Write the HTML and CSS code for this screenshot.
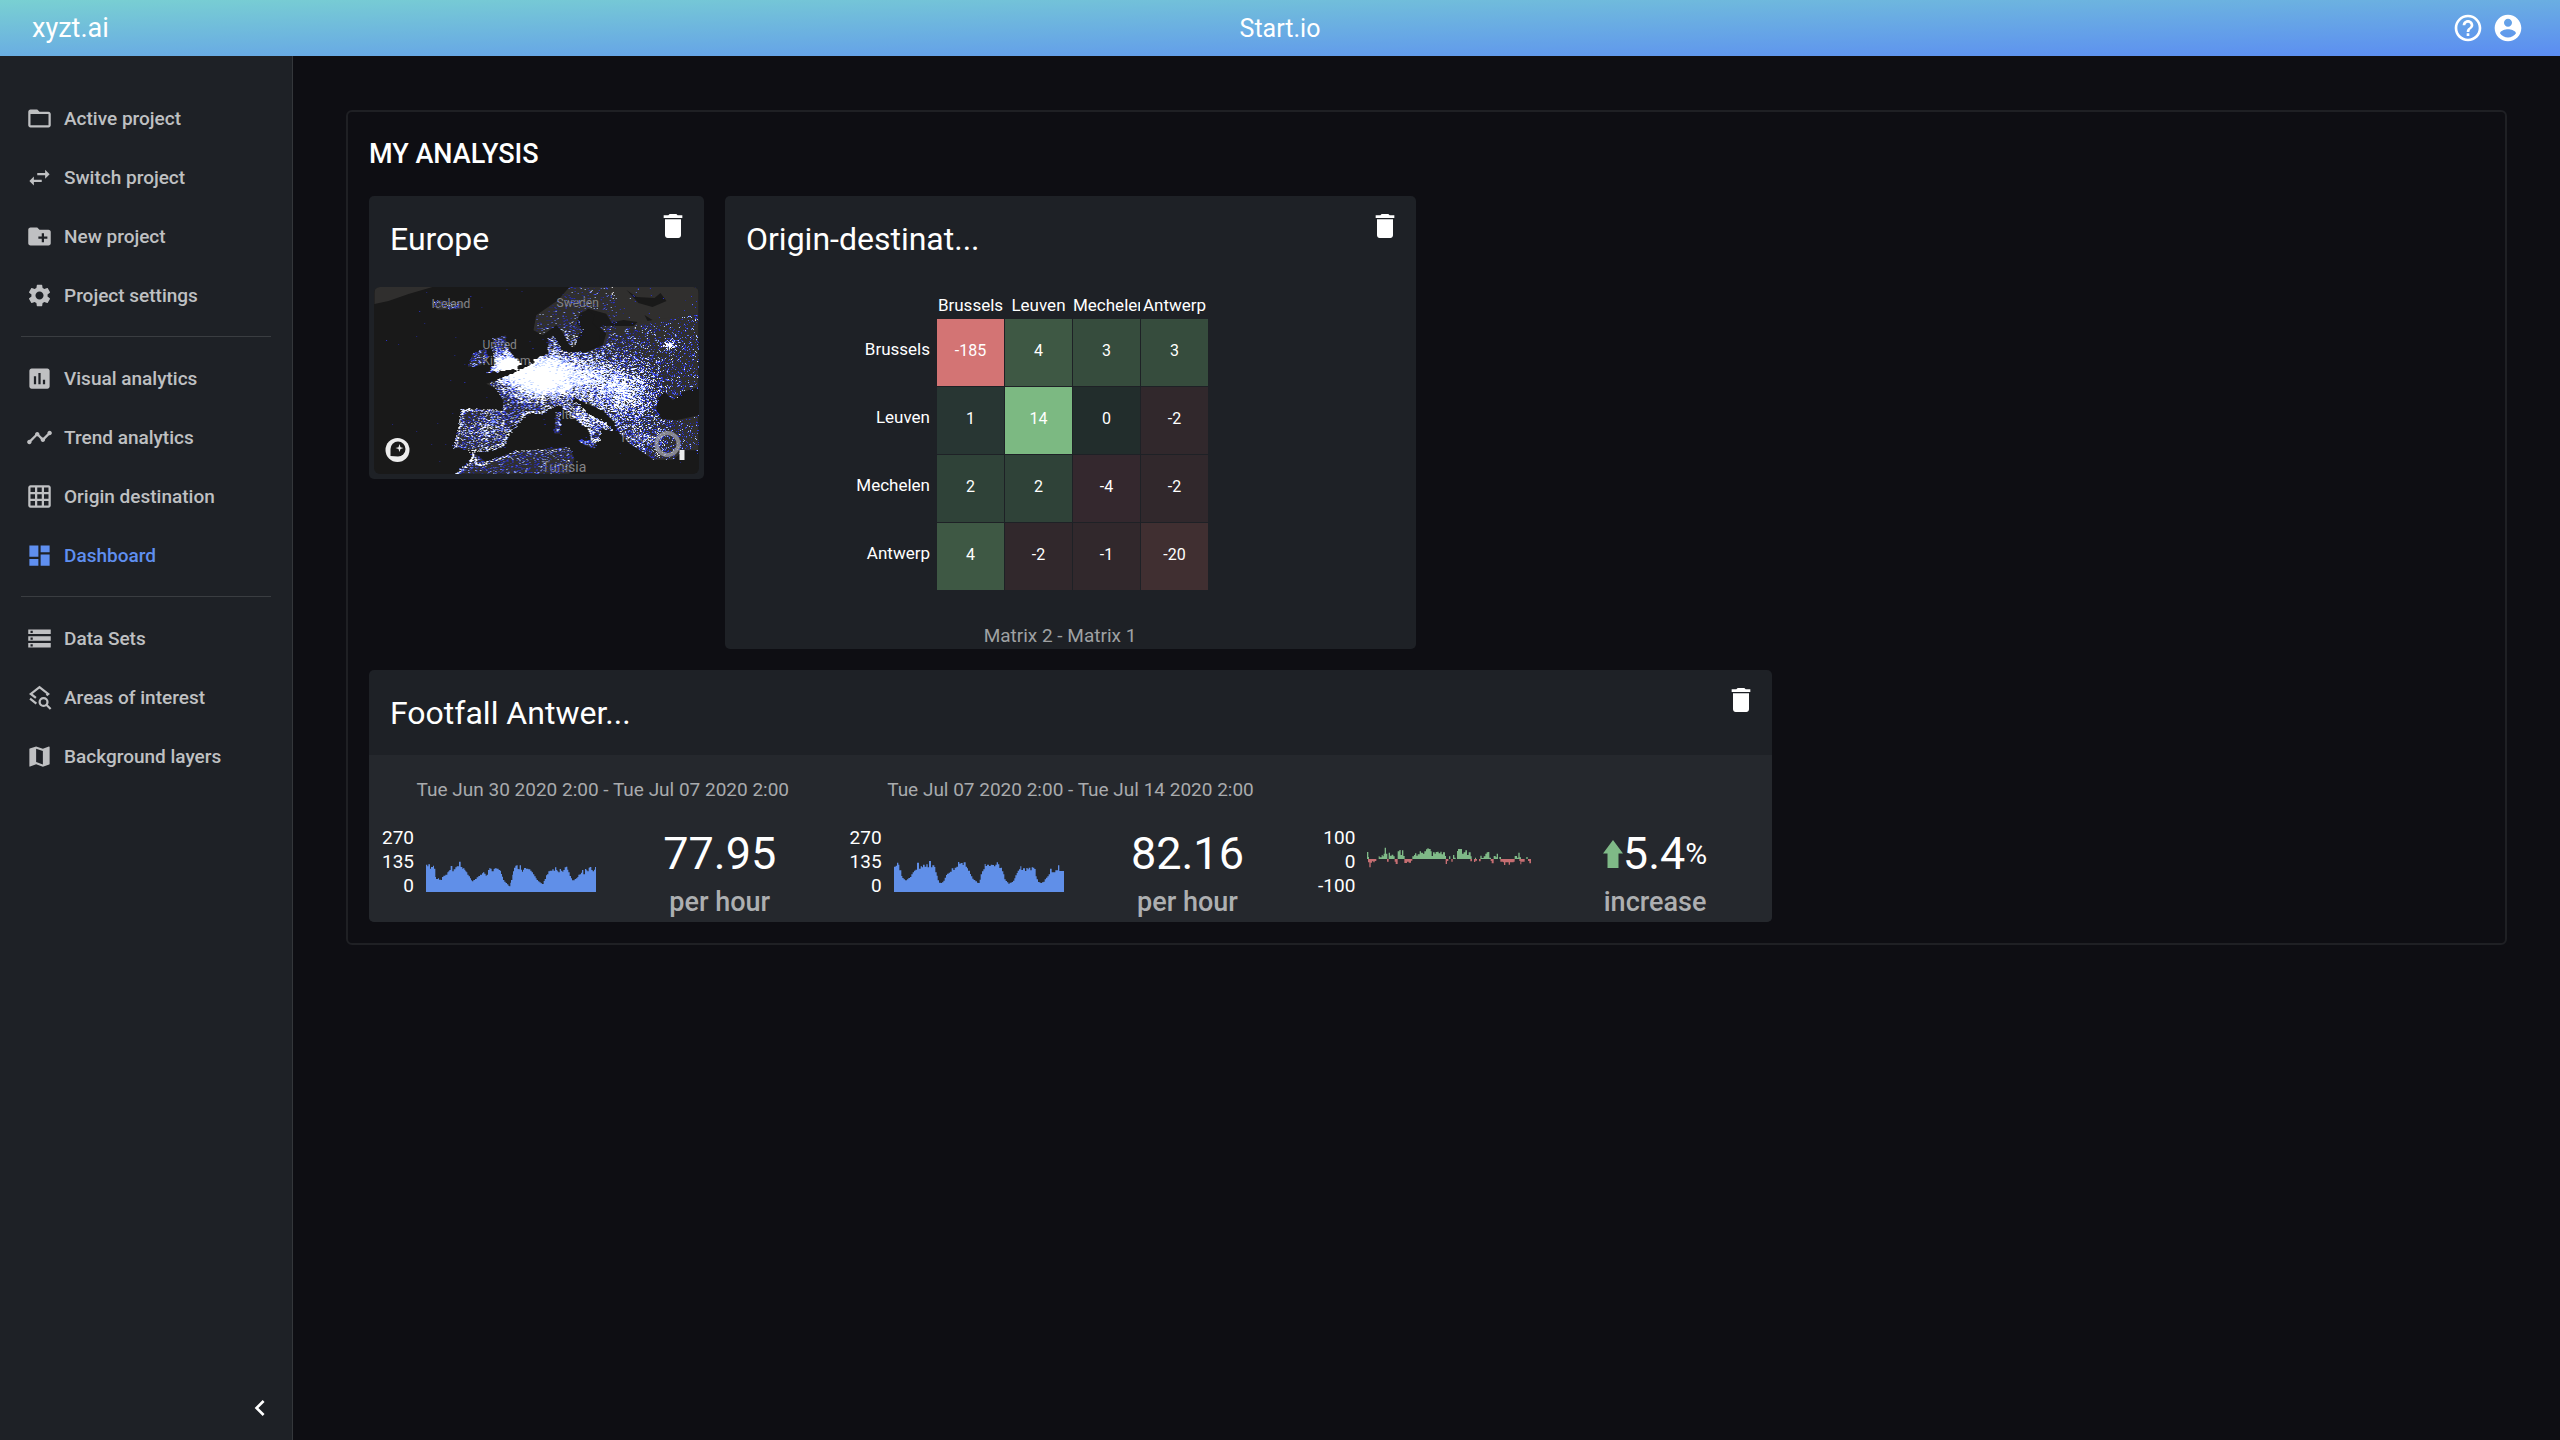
FILE: index.html
```html
<!DOCTYPE html>
<html lang="en">
<head>
<meta charset="utf-8">
<title>xyzt.ai - Dashboard</title>
<link rel="stylesheet" href="styles.css">
</head>
<body>
<header class="topbar">
  <a class="brand" href="#">xyzt.ai</a>
  <span class="topbar-title">Start.io</span>
  <div class="topbar-actions">
    <button class="icon-button" type="button" aria-label="Help"><svg class="icon-lg" viewBox="0 0 24 24"><path d="M11 18h2v-2h-2v2zm1-16C6.48 2 2 6.48 2 12s4.480 10 10 10 10-4.480 10-10S17.520 2 12 2zm0 18c-4.410 0-8-3.590-8-8s3.590-8 8-8 8 3.590 8 8-3.590 8-8 8zm0-14c-2.210 0-4 1.790-4 4h2c0-1.100.9-2 2-2s2 .9 2 2c0 2-3 1.750-3 5h2c0-2.250 3-2.500 3-5 0-2.210-1.790-4-4-4z"/></svg></button>
    <button class="icon-button" type="button" aria-label="Account"><svg class="icon-lg" viewBox="0 0 24 24"><path d="M12 2C6.48 2 2 6.48 2 12s4.480 10 10 10 10-4.480 10-10S17.520 2 12 2zm0 3c1.660 0 3 1.340 3 3s-1.340 3-3 3-3-1.340-3-3 1.340-3 3-3zm0 14.200c-2.500 0-4.710-1.280-6-3.220.03-1.990 4-3.080 6-3.080 1.990 0 5.970 1.090 6 3.080-1.290 1.940-3.500 3.220-6 3.220z"/></svg></button>
  </div>
</header>
<div class="layout">
  <aside class="sidebar">
    <nav>
      <ul class="nav-group">
        <li><a class="nav-item" href="#"><svg class="icon" viewBox="0 0 24 24"><path d="M20 6h-8l-2-2H4c-1.100 0-1.990.9-1.990 2L2 18c0 1.100.9 2 2 2h16c1.100 0 2-.9 2-2V8c0-1.100-.9-2-2-2zm0 12H4V8h16v10z"/></svg>Active project</a></li>
        <li><a class="nav-item" href="#"><svg class="icon" viewBox="0 0 24 24"><path d="M6.990 11L3 15l3.990 4v-3H14v-2H6.990v-3zM21 9l-3.990-4v3H10v2h7.010v3L21 9z"/></svg>Switch project</a></li>
        <li><a class="nav-item" href="#"><svg class="icon" viewBox="0 0 24 24"><path d="M20 6h-8l-2-2H4c-1.110 0-1.990.89-1.990 2L2 18c0 1.110.89 2 2 2h16c1.110 0 2-.89 2-2V8c0-1.110-.89-2-2-2zm-1 8h-3v3h-2v-3h-3v-2h3V9h2v3h3v2z"/></svg>New project</a></li>
        <li><a class="nav-item" href="#"><svg class="icon" viewBox="0 0 24 24"><path d="M19.140 12.940c.04-.3.06-.61.06-.94 0-.32-.02-.64-.07-.94l2.030-1.580c.18-.14.23-.41.12-.61l-1.920-3.320c-.12-.22-.37-.29-.59-.22l-2.390.96c-.5-.38-1.030-.7-1.620-.94l-.36-2.540c-.04-.24-.24-.41-.48-.41h-3.840c-.24 0-.43.17-.47.41l-.36 2.540c-.59.24-1.130.57-1.620.94l-2.390-.96c-.22-.08-.47 0-.59.22L2.740 8.870c-.12.21-.08.47.12.61l2.030 1.580c-.05.3-.09.63-.09.94s.02.64.07.94l-2.030 1.580c-.18.14-.23.41-.12.61l1.920 3.320c.12.22.37.29.59.22l2.390-.96c.5.38 1.030.7 1.620.94l.36 2.540c.05.24.24.41.48.41h3.840c.24 0 .44-.17.47-.41l.36-2.540c.59-.24 1.130-.56 1.620-.94l2.390.96c.22.08.47 0 .59-.22l1.920-3.320c.12-.22.07-.47-.12-.61l-2.010-1.580zM12 15.600c-1.980 0-3.600-1.620-3.600-3.600s1.620-3.600 3.600-3.600 3.600 1.620 3.600 3.600-1.620 3.600-3.600 3.600z"/></svg>Project settings</a></li>
      </ul>
      <ul class="nav-group">
        <li><a class="nav-item" href="#"><svg class="icon" viewBox="0 0 24 24"><path d="M19 3H5c-1.100 0-2 .9-2 2v14c0 1.100.9 2 2 2h14c1.100 0 2-.9 2-2V5c0-1.100-.9-2-2-2zM9 17H7v-7h2v7zm4 0h-2V7h2v10zm4 0h-2v-4h2v4z"/></svg>Visual analytics</a></li>
        <li><a class="nav-item" href="#"><svg class="icon" viewBox="0 0 24 24"><path d="M23 8c0 1.100-.9 2-2 2-.18 0-.35-.02-.51-.07l-3.560 3.550c.05.16.07.34.07.52 0 1.100-.9 2-2 2s-2-.9-2-2c0-.18.02-.36.07-.52l-2.550-2.550c-.16.05-.34.07-.52.07s-.36-.02-.52-.07l-4.550 4.560c.05.16.07.33.07.51 0 1.100-.9 2-2 2s-2-.9-2-2 .9-2 2-2c.18 0 .35.02.51.07l4.560-4.550C8.020 9.360 8 9.180 8 9c0-1.100.9-2 2-2s2 .9 2 2c0 .18-.02.36-.07.52l2.550 2.550c.16-.05.34-.07.52-.07s.36.02.52.07l3.550-3.560C19.020 8.350 19 8.180 19 8c0-1.100.9-2 2-2s2 .9 2 2z"/></svg>Trend analytics</a></li>
        <li><a class="nav-item" href="#"><svg class="icon" viewBox="0 0 24 24"><path d="M20 2H4c-1.100 0-2 .9-2 2v16c0 1.100.9 2 2 2h16c1.100 0 2-.9 2-2V4c0-1.100-.9-2-2-2zM8 20H4v-4h4v4zm0-6H4v-4h4v4zm0-6H4V4h4v4zm6 12h-4v-4h4v4zm0-6h-4v-4h4v4zm0-6h-4V4h4v4zm6 12h-4v-4h4v4zm0-6h-4v-4h4v4zm0-6h-4V4h4v4z"/></svg>Origin destination</a></li>
        <li><a class="nav-item nav-item-active" href="#" aria-current="page"><svg class="icon" viewBox="0 0 24 24"><path d="M3 13h8V3H3v10zm0 8h8v-6H3v6zm10 0h8V11h-8v10zm0-18v6h8V3h-8z"/></svg>Dashboard</a></li>
      </ul>
      <ul class="nav-group">
        <li><a class="nav-item" href="#"><svg class="icon" viewBox="0 0 24 24"><path d="M2 20h20v-4H2v4zm2-3h2v2H4v-2zM2 4v4h20V4H2zm4 3H4V5h2v2zm-4 7h20v-4H2v4zm2-3h2v2H4v-2z"/></svg>Data Sets</a></li>
        <li><a class="nav-item" href="#"><svg class="icon icon-line" viewBox="0 0 24 24"><path d="M8.800 12.300L4.300 8.800 12 2.800l7.700 6-1.500 1.200M3.600 13l5.600 4.400M18.100 18.500l3.800 3.700"/><circle cx="15.600" cy="16" r="3.500"/></svg>Areas of interest</a></li>
        <li><a class="nav-item" href="#"><svg class="icon" viewBox="0 0 24 24"><path d="M20.500 3l-.16.03L15 5.100 9 3 3.360 4.900c-.21.07-.36.25-.36.48V20.500c0 .28.22.5.5.5l.16-.03L9 18.900l6 2.100 5.640-1.900c.21-.07.36-.25.36-.48V3.500c0-.28-.22-.5-.5-.5zM15 19l-6-2.110V5l6 2.110V19z"/></svg>Background layers</a></li>
      </ul>
    </nav>
    <button class="icon-button collapse" type="button" aria-label="Collapse menu"><svg class="icon-lg" viewBox="0 0 24 24"><path d="M15.410 7.410L14 6l-6 6 6 6 1.410-1.410L10.830 12z"/></svg></button>
  </aside>
  <main class="content">
    <section class="panel">
      <h1 class="panel-title">MY ANALYSIS</h1>
      <div class="cards">
        <article class="card card-map">
          <header class="card-header">
            <h2 class="card-title">Europe</h2>
            <button class="icon-button" type="button" aria-label="Delete Europe"><svg class="icon-lg" viewBox="0 0 24 24"><path d="M6 19c0 1.100.9 2 2 2h8c1.100 0 2-.9 2-2V7H6v12zM19 4h-3.500l-1-1h-5l-1 1H5v2h14V4z"/></svg></button>
          </header>
          <div class="map">
            <svg class="map-layer" viewBox="0 0 324 187">
              <g class="map-land" id="land">
                <path d="M0 0H58L34 7 14 14 0 17Z"/>
              </g>
              <path class="map-sea" d="M252 3l10 7 18 1 6-5 6 8-14 6-14-4zM206 26l7-3 7 5-2 8 8 8-2 14-16 8-4-8 4-14-6-8zM270 28l8 5-5 1zM235 36l14-3 14 2-4 4-22 0z"/>
              <g class="map-labels">
                <text x="57" y="21">Iceland</text>
                <text x="182" y="20">Sweden</text>
                <text x="108" y="62">United</text>
                <text x="108" y="78">Kingdom</text>
                <text x="187" y="132">Italy</text>
                <text x="245" y="155">Turkey</text>
                <text class="map-label-lg" x="167" y="185">Tunisia</text>
              </g>
            </svg>
            <canvas class="map-layer" id="heat" width="324" height="187"></canvas>
            <svg class="map-layer" viewBox="0 0 324 187">
              <circle class="map-ring" cx="293" cy="157" r="11"/>
              <rect class="map-mark" x="305" y="163" width="5" height="10"/>
              <circle class="map-badge" cx="23" cy="163" r="12"/>
              <path class="map-pin" d="M16 169v-7a7.500 7.500 0 1 1 7.500 7.500z"/>
              <path class="map-badge" d="M25 157l1 3.200 3 .9-3 1-1 3-1-3-3-1 3-.9z"/>
            </svg>
          </div>
        </article>
        <article class="card card-matrix">
          <header class="card-header">
            <h2 class="card-title">Origin-destinat...</h2>
            <button class="icon-button" type="button" aria-label="Delete Origin-destination"><svg class="icon-lg" viewBox="0 0 24 24"><path d="M6 19c0 1.100.9 2 2 2h8c1.100 0 2-.9 2-2V7H6v12zM19 4h-3.500l-1-1h-5l-1 1H5v2h14V4z"/></svg></button>
          </header>
          <figure class="matrix-figure">
            <table class="matrix">
              <thead>
                <tr><td></td><th scope="col">Brussels</th><th scope="col">Leuven</th><th scope="col">Mechelen</th><th scope="col">Antwerp</th></tr>
              </thead>
              <tbody>
                <tr><th scope="row">Brussels</th><td class="neg-max">-185</td><td class="pos-4">4</td><td class="pos-3">3</td><td class="pos-3">3</td></tr>
                <tr><th scope="row">Leuven</th><td class="pos-1">1</td><td class="pos-max">14</td><td class="zero">0</td><td class="neg-1">-2</td></tr>
                <tr><th scope="row">Mechelen</th><td class="pos-2">2</td><td class="pos-2">2</td><td class="neg-2">-4</td><td class="neg-1">-2</td></tr>
                <tr><th scope="row">Antwerp</th><td class="pos-4">4</td><td class="neg-1">-2</td><td class="neg-1">-1</td><td class="neg-3">-20</td></tr>
              </tbody>
            </table>
            <figcaption class="matrix-caption">Matrix 2 - Matrix 1</figcaption>
          </figure>
        </article>
        <article class="card card-trend">
          <header class="card-header">
            <h2 class="card-title">Footfall Antwer...</h2>
            <button class="icon-button" type="button" aria-label="Delete Footfall Antwerp"><svg class="icon-lg" viewBox="0 0 24 24"><path d="M6 19c0 1.100.9 2 2 2h8c1.100 0 2-.9 2-2V7H6v12zM19 4h-3.500l-1-1h-5l-1 1H5v2h14V4z"/></svg></button>
          </header>
          <div class="trends">
            <section class="trend">
              <p class="trend-range">Tue Jun 30 2020 2:00 - Tue Jul 07 2020 2:00</p>
              <div class="trend-chart">
                <div class="axis"><span>270</span><span>135</span><span>0</span></div>
                <svg class="spark" viewBox="0 0 510 216"><path class="bar-blue" d="M0 213V131H4V136H7V130H12V143H15V138H21V134H24V143H28V168H30V174H36V172H39V176H45V177H48V168H52V164H58V161H64V154H67V151H70V147H74V135H79V151H83V145H88V139H92V136H99V122H104V138H109V143H112V141H115V146H118V151H121V154H124V161H128V166H132V172H135V178H138V181H142V177H147V174H152V169H157V165H162V161H168V157H171V154H175V158H179V164H182V161H186V147H190V141H193V143H197V151H203V144H206V142H212V143H218V147H222V149H225V159H228V167H231V177H235V182H239V186H243V190H247V194H250V196H253V185H255V177H259V161H261V151H264V140H268V134H271V133H275V144H278V145H281V133H285V146H288V152H291V146H294V141H300V143H303V143H307V145H313V149H317V154H321V160H325V166H329V172H332V177H336V181H340V184H344V187H348V189H353V180H356V174H360V163H363V160H367V151H371V149H376V149H379V145H383V149H387V139H391V147H394V151H397V154H401V144H405V149H409V152H412V147H416V139H420V137H424V146H427V154H431V165H435V172H438V178H442V178H446V174H450V172H454V168H457V161H461V160H465V155H468V147H472V160H477V144H481V148H484V151H488V140H491V138H496V147H500V151H504V146H507V138H510V213Z"/></svg>
              </div>
              <div class="trend-value"><p class="figure">77.95</p><p class="unit">per hour</p></div>
            </section>
            <section class="trend">
              <p class="trend-range">Tue Jul 07 2020 2:00 - Tue Jul 14 2020 2:00</p>
              <div class="trend-chart">
                <div class="axis"><span>270</span><span>135</span><span>0</span></div>
                <svg class="spark" viewBox="0 0 510 216"><path class="bar-blue" d="M0 213V137H5V134H9V125H13V131H16V148H22V165H25V171H29V175H33V178H39V175H43V171H48V168H52V160H56V154H60V149H64V146H69V125H75V143H80V136H84V139H87V131H92V137H97V130H101V139H105V120H111V139H115V133H121V138H124V154H128V164H131V178H135V185H140V186H144V184H148V179H152V170H156V162H159V158H164V155H168V152H173V142H178V147H182V140H187V137H192V123H196V128H200V126H206V132H209V124H215V137H219V142H222V149H228V159H231V166H235V173H239V177H244V181H249V185H253V186H257V176H260V160H264V151H268V145H272V129H275V135H279V131H285V135H290V131H295V132H300V136H304V131H308V124H312V130H316V141H320V140H324V151H328V160H331V175H335V180H339V184H343V188H347V185H353V183H357V179H361V172H364V163H368V156H371V149H375V145H379V136H382V147H387V142H393V150H397V141H401V145H404V140H409V148H413V139H417V140H421V144H425V166H428V175H432V183H437V185H441V186H444V184H448V182H452V175H456V170H460V166H464V160H468V143H473V154H478V154H484V148H489V148H492V133H496V150H510V213Z"/></svg>
              </div>
              <div class="trend-value"><p class="figure">82.16</p><p class="unit">per hour</p></div>
            </section>
            <section class="trend">
              <p class="trend-range">&nbsp;</p>
              <div class="trend-chart">
                <div class="axis axis-wide"><span>100</span><span>0</span><span>-100</span></div>
                <svg class="spark" viewBox="0 0 510 216"><path class="bar-green" d="M0 114V93H4V108H6V114H35V106H38V109H44V102H47V106H50V98H53V80H57V98H61V114H65V95H69V104H74V101H79V106H83V114H92V91H97V87H101V102H105V88H109V105H113V114H136V106H141V102H144V97H148V104H152V100H158V91H162V95H168V98H172V91H177V85H181V82H185V84H191V91H194V105H198V94H203V98H206V93H211V92H215V97H220V92H224V100H228V94H234V105H237V114H246V106H250V114H258V102H262V110H266V114H270V90H273V84H285V98H290V94H295V88H300V102H305V94H311V106H314V114H324V110H327V114H340V104H344V111H350V106H355V98H359V94H363V93H367V110H372V114H380V105H386V109H389V98H393V114H397V108H402V114H443V105H450V110H454V95H458V109H462V114H478V108H482V114Z"/><path class="bar-red" d="M3 114H28V120H23V124H19V121H15V125H11V139H7V124H3ZM60 114V122H65V114H83V122H86V129H92V114H112V126H120V122H125V125H132V119H136V114H236V129H240V120H244V114H253V122H257V114H310V121H315V114H321V123H325V119H330V114H336V121H341V114H371V120H374V127H380V114H400V122H408V124H411V132H415V124H425V131H429V124H440V122H443V114H457V120H460V130H463V122H473V114H483V120H487V127H492V114Z"/></svg>
              </div>
              <div class="trend-value"><p class="figure"><svg class="arrow-up" viewBox="0 0 20 28"><path d="M10 0L20 13.500H15.500V28H4.500V13.500H0Z"/></svg>5.4<span class="percent">%</span></p><p class="unit">increase</p></div>
            </section>
          </div>
        </article>
      </div>
    </section>
  </main>
</div>
<script src="map.js"></script>
</body>
</html>
```
FILE: styles.css
```css
* { box-sizing: border-box; }

body {
  margin: 0;
  min-height: 100vh;
  display: flex;
  flex-direction: column;
  background: #0e0e13;
  color: #fff;
  font-family: Roboto, "Liberation Sans", sans-serif;
  font-size: 19px;
}

h1, h2, p, ul, figure { margin: 0; padding: 0; }
ul { list-style: none; }
a { color: inherit; text-decoration: none; }

.icon, .icon-lg { display: block; flex: none; fill: currentColor; }
.icon { width: 27px; height: 27px; }
.icon-lg { width: 32px; height: 32px; }
.icon-line { fill: none; stroke: currentColor; stroke-width: 2; }

.icon-button {
  display: block;
  padding: 0;
  border: 0;
  background: none;
  color: #fff;
  cursor: pointer;
}

/* Top bar */
.topbar {
  display: grid;
  grid-template-columns: 1fr auto 1fr;
  align-items: center;
  height: 56px;
  padding: 0 32px;
  background: linear-gradient(to bottom right, #79d0d2, #5b8cf2);
}
.brand { font-size: 27px; }
.topbar-title { font-size: 25px; }
.topbar-actions { display: flex; justify-content: flex-end; gap: 8px; padding-right: 4px; }

.layout { display: flex; flex: 1; }

/* Sidebar */
.sidebar {
  display: flex;
  flex-direction: column;
  justify-content: space-between;
  flex: none;
  width: 293px;
  padding: 33px 0 16px;
  border-right: 1px solid #34373b;
  background: #1e2126;
}
.nav-group + .nav-group {
  margin: 11px 21px 0;
  padding-top: 12px;
  border-top: 1px solid #3a3d41;
}
.nav-item {
  display: flex;
  align-items: center;
  gap: 11px;
  height: 59px;
  padding-left: 26px;
  color: #bfc0c2;
  font-weight: 500;
}
.nav-group + .nav-group .nav-item { padding-left: 5px; }
.nav-item-active { color: #5f8ff0; }
.collapse { align-self: flex-end; margin-right: 16px; }

/* Dashboard panel */
.content { flex: 1; min-width: 0; padding: 54px 53px; }
.panel {
  padding: 21px;
  border: 2px solid #1f2024;
  border-radius: 6px;
}
.panel-title {
  margin-bottom: 21px;
  font-size: 27px;
  font-weight: 500;
  line-height: 42px;
}
.cards { display: flex; flex-wrap: wrap; align-items: flex-start; gap: 21px; }

.card {
  max-width: 100%;
  overflow: hidden;
  border-radius: 5px;
  background: #1e2126;
}
.card-map { width: 335px; }
.card-matrix { width: 691px; }
.card-trend { width: 1403px; }
.card-header {
  display: flex;
  justify-content: space-between;
  align-items: flex-start;
  height: 85px;
  padding: 14px 15px 0 21px;
}
.card-title { font-size: 32px; font-weight: 400; line-height: 58px; }

/* Map */
.map {
  position: relative;
  height: 187px;
  margin: 6px 5px 5px;
  overflow: hidden;
  border-radius: 6px;
  background: #191919;
}
.map-layer { position: absolute; inset: 0; width: 100%; height: 100%; }
.map-land { fill: #302f2e; }
.map-sea { fill: #191919; }
.map-labels { fill: #858588; font-size: 12px; }
.map-label-lg { font-size: 14px; }
.map-ring { fill: none; stroke: #a3a3a8; stroke-width: 4; opacity: .75; }
.map-mark, .map-badge { fill: #ececec; }
.map-pin { fill: #191919; }

/* Origin-destination matrix */
.matrix-figure { width: 670px; max-width: 100%; }
.matrix {
  width: 484px;
  table-layout: fixed;
  border-collapse: separate;
  border-spacing: 1px;
  font-size: 17px;
}
.matrix-caption {
  padding-top: 32px;
  color: #9fa1a3;
  line-height: 26px;
  text-align: center;
}
.matrix th { padding: 0; overflow: hidden; font-weight: 400; white-space: nowrap; }
.matrix thead td { width: 210px; padding: 0; }
.matrix thead th { height: 36px; padding-top: 9px; text-align: center; }
.matrix tbody th { padding: 0 6px 7px 0; text-align: right; }
.matrix tbody td { height: 67px; padding: 0 0 4px; font-size: 16px; text-align: center; }
.matrix .neg-max { background: #d37474; }
.matrix .neg-3 { background: #402f31; }
.matrix .neg-2 { background: #34282e; }
.matrix .neg-1 { background: #31282c; }
.matrix .zero { background: #222d2c; }
.matrix .pos-1 { background: #283633; }
.matrix .pos-2 { background: #2f4238; }
.matrix .pos-3 { background: #364c3d; }
.matrix .pos-4 { background: #3e5844; }
.matrix .pos-max { background: #7cb982; }

/* Trend comparison */
.trends {
  display: grid;
  grid-template-columns: repeat(3, 1fr);
  background: #25282d;
}
.trend {
  display: grid;
  grid-template-columns: 1fr 1fr;
}
.trend-range {
  grid-column: 1 / -1;
  height: 71px;
  color: #a9abad;
  line-height: 70px;
  text-align: center;
}
.trend-chart { display: flex; gap: 12px; }
.axis {
  width: 45px;
  line-height: 24px;
  text-align: right;
}
.axis-wide { width: 51px; }
.axis span { display: block; }
.spark { width: 170px; height: 72px; margin-top: -5px; }
.bar-blue { fill: #608fe8; }
.bar-green { fill: #7fb987; }
.bar-red { fill: #c66e72; }
.trend-value { text-align: center; }
.figure {
  display: flex;
  justify-content: center;
  align-items: center;
  font-size: 45px;
  line-height: 56px;
}
.percent { font-size: 30px; }
.arrow-up { width: 20px; height: 28px; fill: #7fb987; }
.unit { color: #adafb1; font-size: 27px; font-weight: 500; line-height: 40px; }
```
FILE: map.js
```js
// Land outlines in map units (three per pixel), as x, y pairs; d is the base dot density.
const O = [105, 560];
const shapes = [
  { d: .1, p: [690,560,655,600,590,645,582,690,610,705,650,675,665,690,690,735,705,740,720,700,740,685,725,650,745,625,800,640,830,690,1077,640,1077,560] },
  { d: .2, p: [1077,640,1077,860,1030,875,1000,900,975,875,955,895,950,930,965,955,1010,960,1077,945,1077,1050,1035,1050,1000,1078,940,1078,900,1050,870,1030,840,1000,820,960,790,930,740,910,705,890,700,905,740,940,790,965,815,985,800,990,785,985,780,1015,765,1040,755,1020,750,985,710,955,670,920,640,915,600,935,560,930,545,950,500,1000,490,1030,450,1045,410,1050,385,1050,343,1040,360,975,365,930,390,925,490,930,490,900,470,865,440,850,500,830,560,800,600,770,625,765,625,720,640,705,655,725,670,755,740,755,790,735,800,700,780,680,860,670] },
  { d: .4, p: [460,715,500,705,500,735,520,765,545,790,530,808,480,812,440,820,470,790,460,760] },
  { d: .4, p: [400,760,440,745,445,770,425,795,385,800] },
  { d: .5, p: [648,935,662,935,662,1000,645,1000] },
  { d: .8, p: [715,1020,770,1020,765,1045,735,1035] },
  { d: .3, p: [345,1120,390,1085,400,1055,440,1085,530,1052,690,1040,705,1075,690,1120] },
  { d: .2, p: [275,610,300,600,380,608,370,625,295,628] }
];
const paths = shapes.map(s => {
  let d = '';
  for (let i = 0; i < s.p.length; i += 2) {
    d += (i ? 'L' : 'M') + (s.p[i] - O[0]) / 3 + ' ' + (s.p[i + 1] - O[1]) / 3;
  }
  return d + 'Z';
});
const land = document.getElementById('land');
for (const d of paths) {
  const el = document.createElementNS('http://www.w3.org/2000/svg', 'path');
  el.setAttribute('d', d);
  land.appendChild(el);
}

let seed = 7;
const rnd = () => {
  seed = (seed * 1664525 + 1013904223) >>> 0;
  return seed / 4294967296;
};
const ctx = document.getElementById('heat').getContext('2d');
const areas = paths.map(d => new Path2D(d));
const blob = (x, y, cx, cy, rx, ry) => Math.exp(-(((x - cx) / rx) ** 2) - ((y - cy) / ry) ** 2);
const dot = (x, y, heat) => {
  const t = rnd() * .8 + heat * .75;
  ctx.fillStyle = t > .9 ? '#ffffff' : t > .74 ? '#b4ccff' : t > .6 ? '#5f74f8' : t > .28 ? '#2c34d0' : '#22277e';
  ctx.fillRect(x, y, 1, 1);
};
for (let y = 0; y < 187; y++) {
  for (let x = 0; x < 324; x++) {
    const u = x * 3 + O[0], v = y * 3 + O[1];
    const edge = 2.2 * Math.sin(x * .7 + y * .3) * Math.sin(y * .9 - x * .2);
    const i = areas.findIndex(a => ctx.isPointInPath(a, x + .5 + edge * .6, y + .5 + edge * .6));
    if (i < 0) { if (rnd() < .0012) dot(x, y, -.3); continue; }
    if (i === 0 && u > 830 && rnd() < .93) continue;
    const heat = 1.35 * blob(u, v, 590, 830, 105, 75) + .7 * blob(u, v, 760, 820, 140, 75)
      + 1 * blob(u, v, 500, 795, 50, 35) + .6 * blob(u, v, 740, 960, 70, 45)
      + .65 * blob(u, v, 860, 890, 110, 70) + .4 * blob(u, v, 900, 1020, 90, 60)
      + .5 * blob(u, v, 440, 985, 100, 60) + .9 * blob(u, v, 990, 733, 25, 15)
      + .25 * blob(u, v, 690, 710, 80, 40);
    const clump = .5 + .5 * Math.sin(x * .55 + 3 * Math.sin(y * .31)) * Math.sin(y * .6 + 2 * Math.sin(x * .23));
    if (rnd() < shapes[i].d * (.2 + clump * 1.4) + heat * .85) dot(x, y, heat * .85 - .12 + clump * .35);
  }
}
// Bright coastlines of Iberia, Italy and North Africa.
const coasts = [
  [343,1040,360,975,365,930,390,925,490,930],
  [385,1050,450,1045,490,1030,500,1000,545,950,560,930,600,935,640,915],
  [345,1120,390,1085,400,1060,410,1090,440,1085,530,1052,690,1045],
  [670,920,710,955,750,985,755,1020,775,1015],
  [705,905,740,940,790,965,812,985]
];
for (const c of coasts) {
  for (let i = 0; i + 3 < c.length; i += 2) {
    for (let t = 0; t < 1; t += .03) {
      const x = (c[i] + (c[i + 2] - c[i]) * t - O[0]) / 3 + rnd() * 3 - 1;
      const y = (c[i + 1] + (c[i + 3] - c[i + 1]) * t - O[1]) / 3 + rnd() * 3 - 1;
      dot(Math.round(x), Math.round(y), .8);
    }
  }
}
```
